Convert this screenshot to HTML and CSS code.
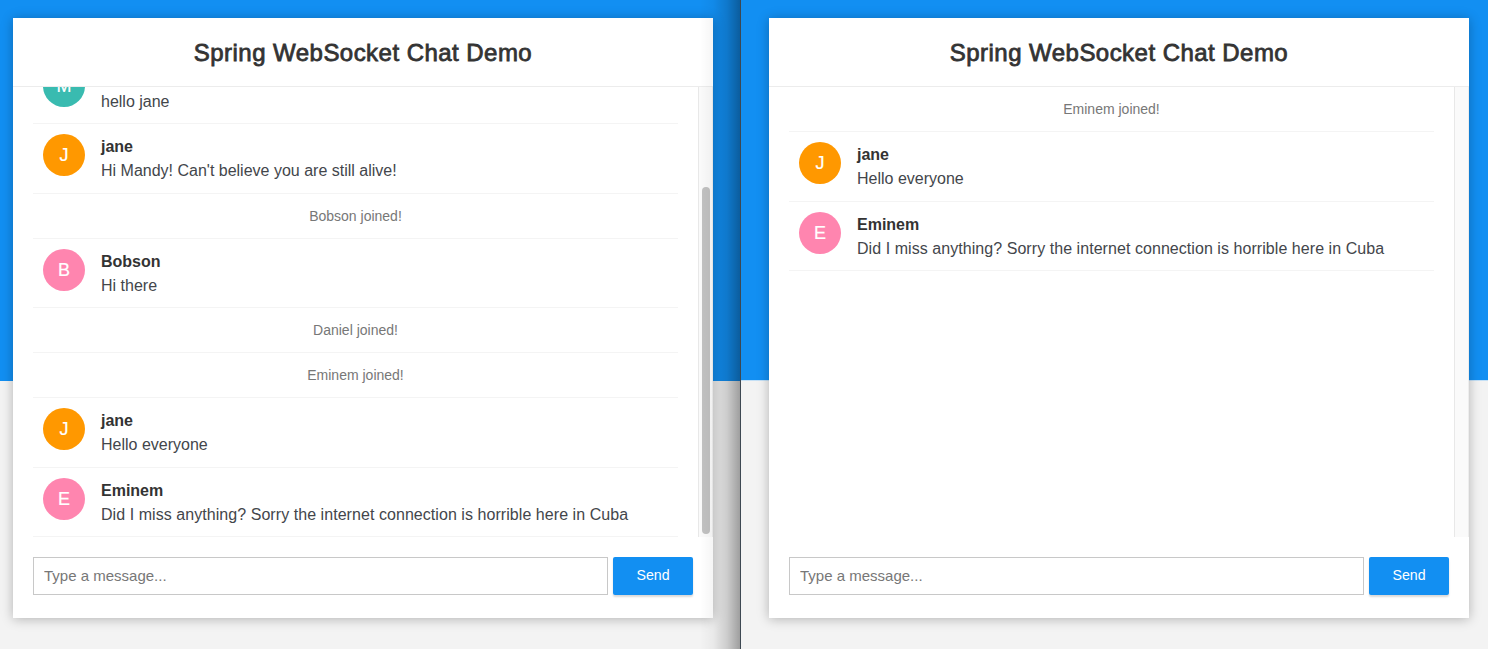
FILE: index.html
```html
<!DOCTYPE html>
<html lang="en">
<head>
<meta charset="utf-8">
<title>Spring WebSocket Chat Demo</title>
<link rel="stylesheet" href="styles.css">
</head>
<body>
<div class="desktop">
  <section class="window window-back">
    <main class="chat">
      <header class="chat-header"><h2>Spring WebSocket Chat Demo</h2></header>
      <div class="history">
        <ul class="messages messages-end">
          <li class="message"><i class="avatar teal">M</i><div class="body"><span class="name"></span><p>hello jane</p></div></li>
          <li class="message"><i class="avatar orange">J</i><div class="body"><span class="name">jane</span><p>Hi Mandy! Can't believe you are still alive!</p></div></li>
          <li class="event">Bobson joined!</li>
          <li class="message"><i class="avatar pink">B</i><div class="body"><span class="name">Bobson</span><p>Hi there</p></div></li>
          <li class="event">Daniel joined!</li>
          <li class="event">Eminem joined!</li>
          <li class="message"><i class="avatar orange">J</i><div class="body"><span class="name">jane</span><p>Hello everyone</p></div></li>
          <li class="message"><i class="avatar pink">E</i><div class="body"><span class="name">Eminem</span><p class="long">Did I miss anything? Sorry the internet connection is horrible here in Cuba</p></div></li>
        </ul>
        <div class="track"><div class="thumb"></div></div>
      </div>
      <form class="composer"><input class="field" type="text" placeholder="Type a message..."><button class="send" type="button">Send</button></form>
    </main>
    <div class="window-shade"></div>
  </section>
  <section class="window window-front">
    <main class="chat">
      <header class="chat-header"><h2>Spring WebSocket Chat Demo</h2></header>
      <div class="history">
        <ul class="messages">
          <li class="event">Eminem joined!</li>
          <li class="message"><i class="avatar orange">J</i><div class="body"><span class="name">jane</span><p>Hello everyone</p></div></li>
          <li class="message"><i class="avatar pink">E</i><div class="body"><span class="name">Eminem</span><p class="long">Did I miss anything? Sorry the internet connection is horrible here in Cuba</p></div></li>
        </ul>
        <div class="track"></div>
      </div>
      <form class="composer"><input class="field" type="text" placeholder="Type a message..."><button class="send" type="button">Send</button></form>
    </main>
  </section>
</div>
</body>
</html>
```
FILE: styles.css
```css
* { box-sizing: border-box; }
body {
  margin: 0;
  font-family: "Liberation Sans", Arial, sans-serif;
  font-size: 16px;
  line-height: 24px;
  color: #333;
}
.desktop { display: flex; width: 1488px; height: 649px; overflow: hidden; }
.window {
  position: relative;
  height: 649px;
  padding-top: 18px;
  overflow: hidden;
  background: linear-gradient(#128ff2 0 381px, #f3f3f3 381px);
}
.window-back { width: 740px; padding-left: 13px; }
.window-front {
  width: 748px;
  padding-left: 28px;
  border-left: 1px solid #3d4852;
  background: linear-gradient(#128ff2 0 380px, #c4e0f6 380px 381px, #f3f3f3 381px);
}
.window-shade {
  position: absolute;
  top: 0;
  right: 0;
  width: 40px;
  height: 100%;
  background: linear-gradient(90deg, rgba(0,0,0,0), rgba(0,0,0,.04) 33%, rgba(0,0,0,.16) 68%, rgba(0,0,0,.35));
}
.chat {
  display: flex;
  flex-direction: column;
  width: 700px;
  height: 599.5px;
  background: #fff;
  box-shadow: 0 1px 11px rgba(0,0,0,.27);
}
.chat-header { height: 69px; border-bottom: 1px solid #ececec; text-align: center; }
.chat-header h2 {
  margin: 0;
  padding-top: 19px;
  font-size: 24px;
  line-height: 32px;
  font-weight: 400;
  letter-spacing: .46px;
  -webkit-text-stroke: .8px #333;
}
.history { display: flex; height: 450px; }
.messages {
  flex: 1;
  display: flex;
  flex-direction: column;
  margin: 0;
  padding: 0 20px;
  list-style: none;
  overflow: hidden;
}
.messages-end { justify-content: flex-end; }
.message, .event { flex: none; border-bottom: 1px solid #f4f4f4; }
.message { display: flex; gap: 16px; height: 69.5px; padding: 10px; }
.event { height: 45px; padding-top: 11px; text-align: center; font-size: 14px; line-height: 22px; color: #777; }
.avatar {
  flex: none;
  width: 42px;
  height: 42px;
  border-radius: 50%;
  font-size: 18px;
  line-height: 43px;
  font-style: normal;
  text-align: center;
  color: #fff;
  -webkit-text-stroke: .2px #fff;
}
.teal { background: #39bbb0; }
.orange { background: #ff9800; }
.pink { background: #ff85af; }
.body { padding-top: 1px; }
.name { display: block; min-height: 24px; font-weight: 700; }
.body p { margin: 0; color: #43464b; white-space: nowrap; }
.body .long { letter-spacing: .056px; }
.track {
  width: 15px;
  padding: 100px 0 0 3px;
  background: #fafafa;
  border-left: 1px solid #e8e8e8;
  border-right: 1px solid #ededed;
}
.thumb { width: 8px; height: 347px; border-radius: 4px; background: #c1c1c1; }
.composer { display: flex; gap: 5px; padding: 20px; }
.field {
  width: 575px;
  height: 38px;
  padding: 0 10px 2px;
  border: 1px solid #c8c8c8;
  border-radius: 0;
  font: 15px "Liberation Sans", Arial, sans-serif;
  background: #fff;
}
.field::placeholder { color: #777; opacity: 1; }
.send {
  width: 80px;
  height: 38px;
  padding: 0 0 2px;
  border: 0;
  border-radius: 2px;
  background: #128ff2;
  color: #fff;
  font: 14.2px "Liberation Sans", Arial, sans-serif;
  box-shadow: 0 2px 2px rgba(0,0,0,.15);
}
```
